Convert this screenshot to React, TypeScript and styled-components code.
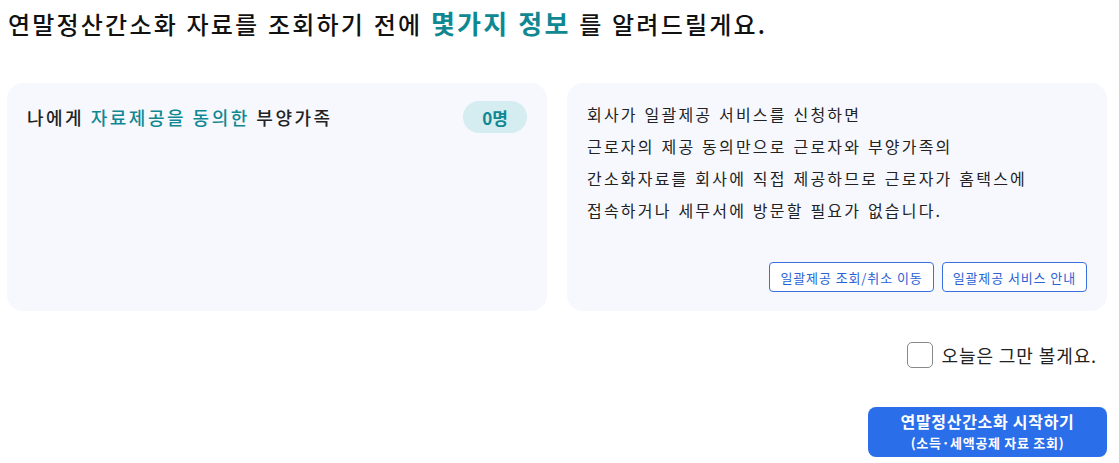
import React from 'react'
import styled, { createGlobalStyle } from 'styled-components'

const Global = createGlobalStyle`
  body {
    margin: 0;
    background: #fff;
    font-family: "Noto Sans CJK KR", "Noto Sans", sans-serif;
    color: #222;
  }
`

const Page = styled.div`
  width: 1100px;
  padding: 0 12px 0 7px;
  display: flex;
  flex-direction: column;
`

const Title = styled.h1`
  margin: 0;
  padding: 4px 0 0 1px;
  height: 83px;
  box-sizing: border-box;
  font-size: 24px;
  font-weight: 500;
  letter-spacing: 2.2px;
  word-spacing: 1px;
  color: #111;
`

const Accent = styled.span<{ $size?: number; $weight?: number }>`
  color: #0f8893;
  font-weight: ${p => p.$weight ?? 700};
  ${p => (p.$size ? `font-size: ${p.$size}px;` : '')}
`

const Cards = styled.div`
  display: grid;
  grid-template-columns: 1fr 1fr;
  gap: 20px;
`

const Card = styled.div`
  background: #f6f8fe;
  border-radius: 16px;
  height: 228px;
  box-sizing: border-box;
  padding: 15px 20px 19px 20px;
  display: flex;
  flex-direction: column;
`

const CardHead = styled.div`
  margin-top: 3px;
  display: flex;
  justify-content: space-between;
  align-items: center;
`

const CardTitle = styled.div`
  font-size: 18px;
  font-weight: 500;
  color: #222;
  letter-spacing: 2.5px;
`

const Badge = styled.span`
  background: #d5edf0;
  color: #0f8893;
  font-weight: 700;
  font-size: 17px;
  border-radius: 16px;
  width: 64px;
  height: 32px;
  display: flex;
  align-items: center;
  justify-content: center;
`

const Desc = styled.p`
  margin: 0;
  font-size: 16px;
  line-height: 32px;
  letter-spacing: 2.2px;
  word-spacing: 1px;
  color: #222;
  flex: 1;
`

const LinkRow = styled.div`
  display: flex;
  justify-content: flex-end;
  gap: 8px;
`

const LinkButton = styled.button`
  font-family: inherit;
  font-size: 13px;
  letter-spacing: 0.9px;
  color: #2a62d6;
  background: #fff;
  border: 1px solid #3a6fe0;
  border-radius: 4px;
  height: 30px;
  padding: 0 10px;
  cursor: pointer;
`

const Options = styled.div`
  display: flex;
  justify-content: flex-end;
  align-items: center;
  gap: 9px;
  padding: 31px 10px 0 0;
`

const Check = styled.span`
  width: 24px;
  height: 24px;
  border: 1px solid #888;
  border-radius: 5px;
  background: #fff;
`

const CheckLabel = styled.label`
  font-size: 18px;
  letter-spacing: 0.9px;
  color: #222;
`

const Footer = styled.div`
  display: flex;
  justify-content: flex-end;
  padding-top: 39px;
`

const StartButton = styled.button`
  font-family: inherit;
  width: 239px;
  height: 50px;
  padding: 0 0 3px;
  border: none;
  border-radius: 8px;
  background: #2b6ee9;
  color: #fff;
  display: flex;
  flex-direction: column;
  align-items: center;
  justify-content: center;
  letter-spacing: 0.7px;
  cursor: pointer;
`

const StartMain = styled.span`
  display: block;
  font-size: 16px;
  line-height: 23px;
  font-weight: 700;
`

const StartSub = styled.span`
  display: block;
  font-size: 13px;
  line-height: 19px;
  font-weight: 700;
`

export default function App() {
  return (
    <Page>
      <Global />
      <Title>
        연말정산간소화 자료를 조회하기 전에 <Accent $size={26}>몇가지 정보</Accent> 를 알려드릴게요.
      </Title>
      <Cards>
        <Card>
          <CardHead>
            <CardTitle>
              나에게 <Accent $weight={500}>자료제공을 동의한</Accent> 부양가족
            </CardTitle>
            <Badge>0명</Badge>
          </CardHead>
        </Card>
        <Card>
          <Desc>
            회사가 일괄제공 서비스를 신청하면
            <br />
            근로자의 제공 동의만으로 근로자와 부양가족의
            <br />
            간소화자료를 회사에 직접 제공하므로 근로자가 홈택스에
            <br />
            접속하거나 세무서에 방문할 필요가 없습니다.
          </Desc>
          <LinkRow>
            <LinkButton>일괄제공 조회/취소 이동</LinkButton>
            <LinkButton>일괄제공 서비스 안내</LinkButton>
          </LinkRow>
        </Card>
      </Cards>
      <Options>
        <Check />
        <CheckLabel>오늘은 그만 볼게요.</CheckLabel>
      </Options>
      <Footer>
        <StartButton>
          <StartMain>연말정산간소화 시작하기</StartMain>
          <StartSub>(소득·세액공제 자료 조회)</StartSub>
        </StartButton>
      </Footer>
    </Page>
  )
}
